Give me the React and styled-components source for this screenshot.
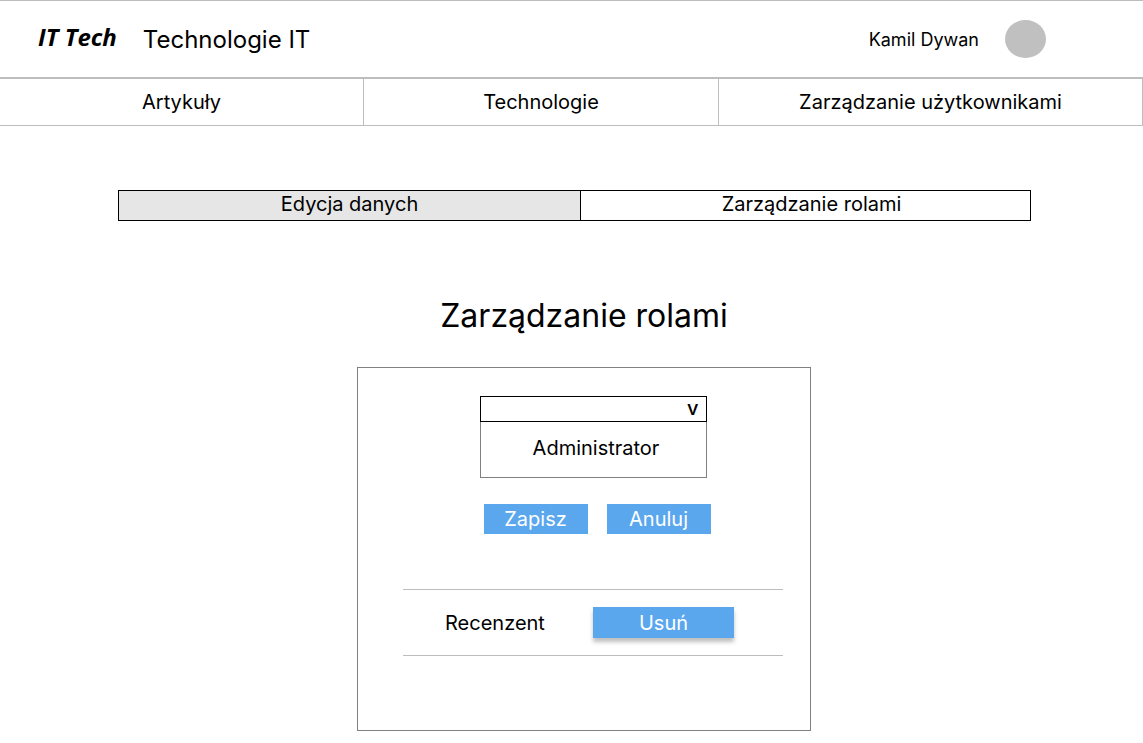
import React from "react";
import styled, { createGlobalStyle } from "styled-components";

const GlobalStyle = createGlobalStyle`
  *, *::before, *::after { box-sizing: border-box; }
  body {
    margin: 0;
    background: #fff;
    color: #000;
    font-family: Inter, "Liberation Sans", sans-serif;
    font-size: 20px;
    line-height: 24px;
  }
  button, select { font: inherit; color: inherit; }
`;

const Header = styled.header`
  display: flex;
  align-items: center;
  height: 79px;
  padding: 0 97px 0 38px;
  border-top: 1px solid #bdbdbd;
  border-bottom: 2px solid #bdbdbd;
`;

const Logo = styled.a`
  margin-right: 26px;
  padding-bottom: 4px;
  color: #000;
  font-family: "Open Sans", "Noto Sans", sans-serif;
  font-size: 24px;
  font-style: italic;
  font-weight: 700;
  text-decoration: none;
`;

const SiteName = styled.span`
  padding-top: 2px;
  font-size: 24px;
`;

const User = styled.div`
  display: flex;
  align-items: center;
  gap: 26px;
  margin-left: auto;
  font-size: 18px;
`;

const UserName = styled.span`
  padding-top: 2px;
`;

const Avatar = styled.span`
  width: 41px;
  height: 38px;
  border-radius: 50%;
  background: #c0c0c0;
`;

const Nav = styled.nav`
  display: grid;
  grid-template-columns: 364fr 355fr 424fr;
`;

const NavLink = styled.a`
  display: flex;
  align-items: center;
  justify-content: center;
  height: 47px;
  border-right: 1px solid #bdbdbd;
  border-bottom: 1px solid #bdbdbd;
  color: #000;
  text-decoration: none;
`;

const Tabs = styled.div`
  display: grid;
  grid-template-columns: 462fr 449fr;
  margin: 64px 112px 0 118px;
  border: 1px solid #000;
`;

const Tab = styled.button`
  height: 29px;
  padding: 0 0 4px;
  border: 0;
  background: ${(p) => (p.$shaded ? "#e6e6e6" : "#fff")};

  & + & {
    padding-left: 12px;
  }

  &:first-child {
    border-right: 1px solid #000;
  }
`;

const Content = styled.main`
  display: flex;
  flex-direction: column;
  align-items: center;
  padding: 75px 0 12px 25px;
`;

const Title = styled.h1`
  margin: 0;
  font-size: 32px;
  font-weight: 400;
  line-height: 40px;
`;

const Panel = styled.section`
  width: 100%;
  max-width: 454px;
  margin-top: 31px;
  padding: 28px 27px 74px 45px;
  border: 1px solid #808080;
`;

const RoleForm = styled.form`
  display: flex;
  flex-direction: column;
  align-items: center;
`;

const Dropdown = styled.div`
  width: 227px;
`;

const SelectBox = styled.div`
  display: grid;
  align-items: center;

  & > * {
    grid-area: 1 / 1;
  }
`;

const Select = styled.select`
  width: 100%;
  height: 26px;
  padding: 0 28px 0 8px;
  border: 1px solid #000;
  border-radius: 0;
  appearance: none;
  background: #fff;
`;

const Arrow = styled.span`
  justify-self: end;
  margin-right: 8px;
  padding-bottom: 2px;
  font-weight: 500;
  pointer-events: none;
`;

const Options = styled.ul`
  margin: 0;
  padding: 14px 0 17px 6px;
  border: 1px solid #808080;
  border-top: 0;
  list-style: none;
  text-align: center;
`;

const Actions = styled.div`
  display: flex;
  gap: 19px;
  margin-top: 26px;
  padding-left: 8px;
`;

const Button = styled.button`
  width: ${(p) => (p.$wide ? "141px" : "104px")};
  height: ${(p) => (p.$wide ? "31px" : "30px")};
  padding: 0;
  border: 0;
  background: #5ba7ee;
  box-shadow: ${(p) => (p.$wide ? "0 4px 4px rgba(0, 0, 0, 0.25)" : "none")};
  color: #fff;
`;

const RoleList = styled.ul`
  margin: 55px 0 0;
  padding: 0;
  list-style: none;
`;

const RoleRow = styled.li`
  display: flex;
  align-items: center;
  justify-content: space-between;
  height: 67px;
  padding: 0 49px 0 42px;
  border-top: 1px solid #bdbdbd;
  border-bottom: 1px solid #bdbdbd;
`;

const roles = ["Recenzent"];

export default function App() {
  return (
    <>
      <GlobalStyle />
      <Header>
        <Logo href="#">IT Tech</Logo>
        <SiteName>Technologie IT</SiteName>
        <User>
          <UserName>Kamil Dywan</UserName>
          <Avatar />
        </User>
      </Header>
      <Nav>
        <NavLink href="#artykuly">Artykuły</NavLink>
        <NavLink href="#technologie">Technologie</NavLink>
        <NavLink href="#uzytkownicy">Zarządzanie użytkownikami</NavLink>
      </Nav>
      <Tabs>
        <Tab type="button" $shaded>Edycja danych</Tab>
        <Tab type="button">Zarządzanie rolami</Tab>
      </Tabs>
      <Content>
        <Title id="roles-title">Zarządzanie rolami</Title>
        <Panel aria-labelledby="roles-title">
          <RoleForm onSubmit={(e) => e.preventDefault()}>
            <Dropdown>
              <SelectBox>
                <Select aria-labelledby="roles-title" defaultValue="">
                  <option value="" />
                  <option value="admin">Administrator</option>
                </Select>
                <Arrow aria-hidden="true">v</Arrow>
              </SelectBox>
              <Options>
                <li>Administrator</li>
              </Options>
            </Dropdown>
            <Actions>
              <Button type="submit">Zapisz</Button>
              <Button type="reset">Anuluj</Button>
            </Actions>
          </RoleForm>
          <RoleList>
            {roles.map((role) => (
              <RoleRow key={role}>
                <span>{role}</span>
                <Button type="button" $wide>Usuń</Button>
              </RoleRow>
            ))}
          </RoleList>
        </Panel>
      </Content>
    </>
  );
}
